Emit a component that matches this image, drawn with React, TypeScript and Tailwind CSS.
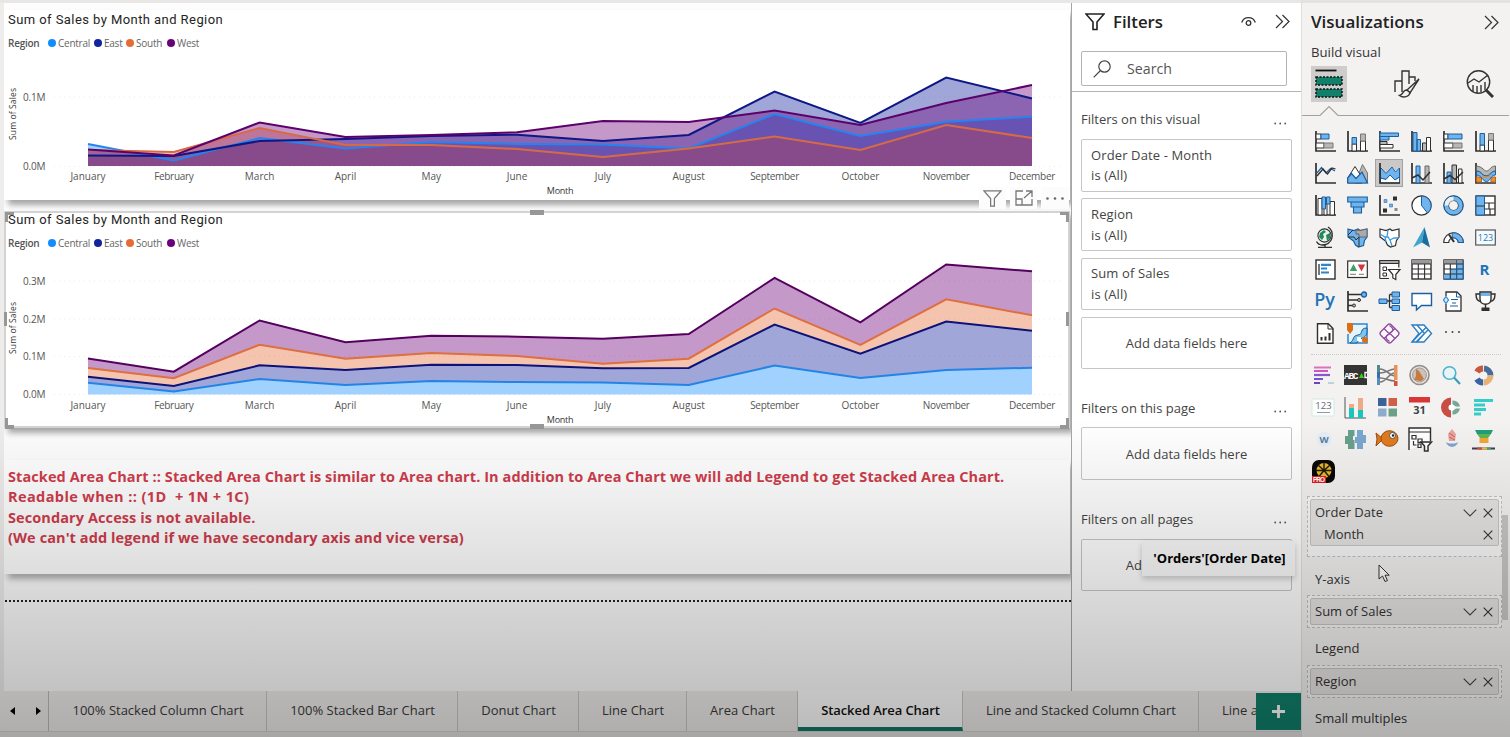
import type { ReactNode } from "react";

const K = "#2f2f2f";
const B = "#6fb4ec";
const D = "#1b5f9e";
const G = "#b9b7b6";

const MONTHS = [
  "January", "February", "March", "April", "May", "June",
  "July", "August", "September", "October", "November", "December",
];

type Series = { color: string; line: string; ys: number[] };

const AREA: Series[] = [
  { color: "#118DFF", line: "#2484f2", ys: [144, 160.5, 138, 148.5, 142, 144, 144.5, 148.5, 114, 136, 121.7, 116.7] },
  { color: "#12239E", line: "#0d1785", ys: [155.5, 156, 141, 139, 136, 134.7, 141, 135, 91.5, 123, 77.5, 98.5] },
  { color: "#E66C37", line: "#d76a45", ys: [150, 152, 128, 145, 145, 149, 157, 148.5, 136.5, 150, 125, 138] },
  { color: "#6B007B", line: "#5c006c", ys: [149.5, 155.5, 122.5, 137, 135, 132.3, 121, 122, 110.5, 125, 103, 85] },
];

const STACKED: Series[] = [
  { color: "#118DFF", line: "#2484e6", ys: [382.7, 391.5, 379, 385, 381, 382, 382.5, 385, 365.5, 378, 370, 367.7] },
  { color: "#12239E", line: "#0c1278", ys: [376.7, 386, 365.3, 370, 364.7, 365, 368.3, 368, 324.5, 353.7, 321.5, 330.7] },
  { color: "#E66C37", line: "#dd6f40", ys: [368, 378.3, 344.7, 358.7, 353, 356, 363.7, 358.7, 308.5, 345, 299.3, 315.3] },
  { color: "#6B007B", line: "#55005f", ys: [358.5, 371.7, 320.5, 342.3, 335.7, 336.7, 338.7, 334, 277.9, 322.3, 264.5, 271.3] },
];

const monthX = (i: number) => 88 + i * 85.82;

const points = (ys: number[]) => ys.map((y, i) => `${monthX(i).toFixed(1)},${y}`);

function Chart(props: {
  top: number; height: number; base: number; labelY: number; monthY: number; titleY: number;
  ticks: [string, number][]; series: Series[]; stacked?: boolean;
}) {
  const { top, height, base, labelY, monthY, titleY, ticks, series, stacked } = props;
  return (
    <svg
      className="block w-full"
      height={height}
      viewBox={`5 ${top} 1065 ${height}`}
      fontFamily="'Open Sans', 'Noto Sans', sans-serif"
      fontSize="10"
      fill="#555"
    >
      {ticks.map(([t, y]) => (
        <g key={t}>
          <line x1="54" x2="1060" y1={y} y2={y} stroke="#ebebeb" strokeDasharray="1 4" />
          <text x="23" y={y + 3.7} textLength="22.5">{t}</text>
        </g>
      ))}
      <text transform={`translate(16 ${titleY}) rotate(-90)`} textAnchor="middle" fontSize="8.5" fill="#333" textLength="52">
        Sum of Sales
      </text>
      {series.map((s, i) => {
        const floor = stacked && i > 0
          ? points(series[i - 1].ys).reverse()
          : [`${monthX(11)},${base}`, `${monthX(0)},${base}`];
        return <polygon key={s.color} points={[...points(s.ys), ...floor].join(" ")} fill={s.color} fillOpacity="0.4" />;
      })}
      {series.map((s) => (
        <polyline key={s.color} points={points(s.ys).join(" ")} fill="none" stroke={s.line} strokeWidth="2" />
      ))}
      {MONTHS.map((m, i) => (
        <text key={m} x={monthX(i)} y={labelY} textAnchor="middle" letterSpacing={m.length > 7 ? -0.3 : 0}>{m}</text>
      ))}
      <text x="560" y={monthY} textAnchor="middle" fontSize="9" letterSpacing="-0.3" fill="#333">Month</text>
    </svg>
  );
}

function ChartHeader() {
  return (
    <div>
      <div className="h-[20px] whitespace-nowrap font-[Roboto,sans-serif] text-[13px] leading-[20px] tracking-[0.43px] text-[#252423]">
        Sum of Sales by Month and Region
      </div>
      <div className="mt-[5px] flex h-[16px] items-center text-[10px] leading-[16px] tracking-[-0.25px] text-[#666]">
        <span className="mr-[6px] w-[34px] whitespace-nowrap font-semibold text-[#555]">Region</span>
        {[["Central", "bg-[#118DFF]", "w-[46px]"], ["East", "bg-[#12239E]", "w-[32px]"], ["South", "bg-[#E66C37]", "w-[41px]"], ["West", "bg-[#6B007B]", "w-[40px]"]].map(([n, c, w]) => (
          <span key={n} className={`flex items-center gap-[2px] ${w}`}>
            <i className={`h-[8px] w-[8px] shrink-0 rounded-full ${c}`} />
            {n}
          </span>
        ))}
      </div>
    </div>
  );
}

function Chevrons() {
  return (
    <svg width="15" height="15" viewBox="0 0 15 15" fill="none" stroke="#333" strokeWidth="1.2">
      <path d="M1 1l6.5 6.5L1 14M7.5 1L14 7.5 7.5 14" />
    </svg>
  );
}

function FilterCard({ name }: { name?: string }) {
  return (
    <div className="flex h-[52.5px] w-[211px] flex-col justify-center rounded-[2px] border border-[#c8c6c4] px-[9px] text-[13px] leading-[20.5px] text-[#444]">
      {name ? (
        <>
          <div className="tracking-[0.12px]">{name}</div>
          <div className="tracking-[0.12px]">is (All)</div>
        </>
      ) : (
        <div className="pt-px text-center text-[13px]">Add data fields here</div>
      )}
    </div>
  );
}

function FilterHeading({ text }: { text: string }) {
  return (
    <div className="flex h-[20px] items-center justify-between pr-[14px] text-[13px] text-[#444]">
      <span>{text}</span>
      <svg width="13" height="3" viewBox="0 0 13 3" fill="#555" className="relative top-[3px]">
        <circle cx="1.2" cy="1.5" r="0.9" /><circle cx="6.2" cy="1.5" r="0.9" /><circle cx="11.2" cy="1.5" r="0.9" />
      </svg>
    </div>
  );
}

const axis = <path d="M1 0V20H21" fill="none" stroke={K} strokeWidth="1.7" />;
const box = (fill = "#fff") => <rect x="1" y="1" width="19" height="19" fill={fill} stroke={K} strokeWidth="1.4" />;

const STANDARD: ReactNode[] = [
  <>{axis}<g stroke={K}><path d="M1 3h5v5H1z" fill="#fff" /><path d="M6 3h8v5H6z" fill={B} stroke={D} /><path d="M1 12h8v5H1z" fill="#fff" /><path d="M9 12h9v5H9z" fill={G} stroke="#777" /></g></>,
  <>{axis}<path d="M5 13h4.500v7H5z" fill="#fff" stroke={K} /><path d="M5 6.5h4.500v6.5H5z" fill={B} stroke={D} /><path d="M13.500 10h5v10h-5z" fill="#fff" stroke={K} /><path d="M13.500 3h5v7h-5z" fill={G} stroke="#777" /></>,
  <>{axis}<path d="M1 2h18.5v3.500H1z" fill={B} stroke={D} /><path d="M1 5.500h9V9H1z" fill={B} stroke={D} /><path d="M1 10.500h7v3H1z" fill={G} stroke={K} /><path d="M1 13.500h13v3.500H1z" fill="#fff" stroke={K} /></>,
  <>{axis}<path d="M2 1.500h4V20H2zM6 8.500h3.500V20H6z" fill={B} stroke={D} /><path d="M11.500 12h4v8h-4z" fill={G} stroke={K} /><path d="M15.500 6.500h4V20h-4z" fill="#fff" stroke={K} /></>,
  <>{axis}<path d="M1 3h4v5H1zM1 12h9v5H1z" fill="#fff" stroke={K} /><path d="M5 3h14v5H5z" fill={B} stroke={D} /><path d="M10 12h9v5h-9z" fill={G} stroke="#777" /></>,
  <>{axis}<path d="M5 14h4.500v6H5zM13.500 9h5v11h-5z" fill="#fff" stroke={K} /><path d="M5 2.500h4.500V14H5z" fill={B} stroke={D} /><path d="M13.500 2.500h5V9h-5z" fill={G} stroke="#777" /></>,
  <>{axis}<path d="M2 10L6.500 4.500 11 10l4.500-4.500L20 8" fill="none" stroke={D} strokeWidth="1.2" /><path d="M2 13L8 6l4.500 5 4.500-6 3.500 1" fill="none" stroke={K} strokeWidth="1.3" /></>,
  <><path d="M8 20L15.500 1.500 20.500 10v10z" fill={G} stroke="#777" /><path d="M.7 15L8 3.500 15 14.500v5.500H.7z" fill="#fff" stroke={K} /><path d="M.7 20v-5L4.500 10.500 9 15.500l6-6.500 5.500 11z" fill={B} stroke={D} strokeWidth="1.2" /></>,
  <><path d="M2 19.500V5l5 5L13 4l4 4 3.500-3v14.500z" fill="#fff" /><path d="M1.500 15V4.500L7 10.500 13 4l3.500 5 4-4v9l-4.500 3-5-5-4 4.500z" fill={B} stroke={D} /><path d="M1.500 20v-5L7 16.500l4-4.500 5 5 4.500-3v6z" fill="#fff" stroke={D} />{axis}</>,
  <>{axis}<path d="M5 3h4v17H5z" fill={B} stroke={D} /><path d="M14 3h4v17h-4z" fill={G} stroke="#666" /><path d="M1 15l6-3 5 5 7-8" fill="none" stroke={K} strokeWidth="1.5" /></>,
  <>{axis}<path d="M4 9h4v11H4z" fill={B} stroke={D} /><path d="M9 2h4.500v18H9z" fill={G} stroke={K} /><path d="M15.500 6h3.500v14h-3.500z" fill="#fff" stroke={K} /><path d="M1 16l6-3.500 5 4 8-7.500" fill="none" stroke={K} strokeWidth="1.5" /></>,
  <>{axis}<path d="M1.500 3c7 1 7 5 10 5s4-5 9-5v5c-5 0-6 5-9.500 5S7 8 1.500 8z" fill={G} stroke="#666" /><path d="M1.500 14h5v5h-5zM16 14h4.500v5H16z" fill="#e78f3c" stroke="#b9651a" /><path d="M1.500 8c5 0 5 5 10 5s4-5 9-5v4c-5 0-5 6.500-9 6.500S6.500 12 1.500 12z" fill={B} stroke={D} /><path d="M7 12.500c2 2.500 6 2.500 8 0" stroke="#e78f3c" strokeWidth="1.5" fill="none" /></>,
  <>{axis}<path d="M3 3.500h4V20H3zM9 9h3v11H9zM15 6.500h4.500V20H15z" fill="#fff" stroke={K} /><path d="M7 2h3.500v12H7zM11.500 2H15v7h-3.500z" fill={B} stroke={D} /></>,
  <g fill={B} stroke={D} strokeWidth="1.1"><path d="M.7 2h19.600v5H.7zM4 7h13v5H4zM6.500 12h8v6h-8z" /></g>,
  <>{axis}<g fill={K}><path d="M14 1.500h4v4h-4zM4 13.500h4v4H4z" /></g><g fill={B} stroke={D} strokeWidth=".5"><path d="M5 4.500h3v3H5zM10.500 9h3v3h-3z" /></g><path d="M15.500 13h3v3h-3z" fill="#888" /></>,
  <><circle cx="10.500" cy="10.500" r="9.6" fill="#fff" stroke={K} strokeWidth="1.2" /><path d="M10.500 1a9.600 9.600 0 0 1 6 17l-6-7.500z" fill={B} stroke={D} /></>,
  <><circle cx="10.500" cy="10.500" r="7.2" fill="none" stroke={K} strokeWidth="5.5" /><circle cx="10.500" cy="10.500" r="7.2" fill="none" stroke={B} strokeWidth="4.2" /><path d="M10.500 3.300a7.200 7.200 0 0 0-7.200 7.200" fill="none" stroke="#eee" strokeWidth="4.2" /><circle cx="10.500" cy="10.500" r="9.8" fill="none" stroke={D} /></>,
  <>{box()}<path d="M1 1h8.500v19H1z" fill={B} stroke={D} /><path d="M1 11h8.500M9.500 8h10M14 8v6M9.500 14h10M15 14v6" stroke={K} fill="none" strokeWidth="1.2" /></>,
  <><circle cx="9.500" cy="8.500" r="6.6" fill="#e9f2ed" stroke={K} strokeWidth="1.1" /><path d="M5 6l4-3 2 2-3 2 1 3-2 3-3-3zM11 8l4-2v5l-3 3z" fill="#218a5b" /><path d="M13 0c6 4 6 14-2 17.500-4 1-8 0-9.500-3M10 17.500V20M3 20.300h14" fill="none" stroke={K} strokeWidth="1.3" /></>,
  <><path d="M1 2l6 1.500L11 2l2 1.500L20 2v8l-2.500 3.500-1 5-5 1.500-3-2-2-4L1 10z" fill={B} stroke={D} strokeWidth="1.2" /><path d="M9 3l4 .5L20 2v8h-8V7H9z" fill="#aaa" stroke="#666" /><path d="M1 10h6l2 3 3-3v10M1 8l5-5" fill="none" stroke={K} /></>,
  <><path d="M1 2l6 1.500L11 2l2 1.500L20 2v8l-2.500 3.500-1 5-5 1.500-3-2-2-4L1 10z" fill="#fff" stroke={K} strokeWidth="1.2" /><path d="M1 7l5 3h3l2 3 4-2h5M6 10l1 5M9 3l-1 7M11 13l2 6" fill="none" stroke="#3d9be0" strokeWidth="1.3" /></>,
  <><path d="M13.500 0L2 20.500l9-5z" fill="#3ea6cf" /><path d="M13.500 0l5.500 20.500-8-5z" fill="#176f9e" /></>,
  <><path d="M.7 15.500a9.800 9.800 0 0 1 19.600 0h-5a4.800 4.800 0 0 0-9.600 0z" fill="#fff" stroke={K} strokeWidth="1.1" /><path d="M9 5.800a9.800 9.800 0 0 1 11.300 9.700h-5A4.800 4.800 0 0 0 9.500 10.800z" fill={B} stroke={D} /><path d="M6 7.500l5 7.500" stroke={K} strokeWidth="2" /></>,
  <><rect x=".7" y="3" width="19.6" height="15" fill="#f5fafd" stroke="#555" strokeWidth="1.2" /><text x="10.500" y="14" fontSize="9" textAnchor="middle" fill="#1d7cc0" fontFamily="'Open Sans', sans-serif">123</text></>,
  <>{box()}<path d="M4 5v11" stroke={K} strokeWidth="1.3" /><path d="M6 5.800h10M6 9.500h6M6 13.500h8" stroke="#2b86cf" strokeWidth="2.2" /></>,
  <><rect x=".7" y="2" width="19.6" height="16.5" fill="#fff" stroke={K} strokeWidth="1.2" /><path d="M6.500 5l3.700 7H2.800z" fill="#3aa25e" /><path d="M14.500 12.500L10.800 5.500h7.400z" fill="#d8323d" /><path d="M3 15.300h6M12 15.300h5" stroke="#777" /></>,
  <><path d="M.8 19.500V1.500h19v7" fill="#fff" stroke={K} strokeWidth="1.2" /><path d="M.8 1.500h19v3h-19z" fill="#aaa" stroke={K} /><path d="M.8 19.500H10M4 8h3.500v3.500H4zM4 14h3.500v3H4z" fill="none" stroke={K} /><path d="M9.500 10.500H21l-4.200 5v5l-3-1.500v-3.500z" fill="#fff" stroke={K} strokeWidth="1.2" /></>,
  <>{box()}<path d="M1 1h19v4H1z" fill="#999" /><path d="M1 5h19M1 10h19M1 15h19M7.300 5v15M13.600 5v15" stroke={K} strokeWidth="1.1" /></>,
  <>{box()}<path d="M1 1h19v4H1z" fill="#999" /><path d="M13.600 5H20v10h-6.400zM1 15h19v5H1zM7.300 10h6.300v10H7.300z" fill={B} /><path d="M1 5h19M1 10h19M1 15h19M7.300 5v15M13.600 5v15" stroke={K} strokeWidth="1.1" /><path d="M13.600 1v19M20 1v19H1" stroke={D} fill="none" /></>,
  <text x="9.5" y="15.5" fontSize="15" fontWeight="700" textAnchor="middle" fill="#2274b8" fontFamily="'Open Sans', sans-serif">R</text>,
  <text x="9.5" y="15" fontSize="18" fontWeight="600" textAnchor="middle" fill="#2274b8" fontFamily="'Open Sans', sans-serif">Py</text>,
  <>{axis}<path d="M1 3.500h13M1 9h10M1 14.500h5" stroke={K} strokeWidth="1.3" /><circle cx="17" cy="3.500" r="2.5" fill={B} stroke={D} strokeWidth="1.3" /><circle cx="12" cy="9" r="1.5" fill={G} stroke={K} /><circle cx="7" cy="14.500" r="1.5" fill={G} stroke={K} /></>,
  <><path d="M8 10h5M10.500 3.500v13M10.500 3.500H13M10.500 16.500H13" stroke={K} fill="none" strokeWidth="1.3" /><path d="M0 8h8v4.500H0zM13 1h7.500v5H13zM13 8h7.500v4.500H13zM13 14.500h7.500v5H13z" fill={B} stroke={D} /></>,
  <path d="M1 2.500h19.500v12H10.500L5.500 19v-4.500H1z" fill="#fff" stroke={D} strokeWidth="1.4" />,
  <><path d="M3 5V1h11l4 4v15H3v-7" fill="#fff" stroke={K} strokeWidth="1.3" /><path d="M13.500 1v5H18M8 8.500h7M9 12h4M7 15h8" stroke={D} fill="none" /><path d="M3 5.500L5.500 9 3 12.500.5 9z" fill="#d6ecfb" stroke="#2b86cf" strokeWidth="1.2" /></>,
  <><path d="M5 1h11v7c0 7-11 7-11 0z" fill="#fff" stroke={K} strokeWidth="1.4" /><path d="M5 3H1c0 6 2 7 5 7.500M16 3h4c0 6-2 7-5 7.500M10.500 13v4" fill="none" stroke={K} strokeWidth="1.4" /><path d="M6 2h9v3H6z" fill={B} /><path d="M6.500 16.500h8v3.500h-8z" fill={K} /></>,
  <><path d="M2.500.8h10.800L18 5.500v14.700H2.500z" fill="#fff" stroke={K} strokeWidth="1.4" /><path d="M13 1v5h5" fill="none" stroke={K} /><path d="M6.500 17.500V14M10.500 17.500v-4M14.500 17.500V10" stroke={K} strokeWidth="2" /></>,
  <><path d="M6 1h14v19H1V11" fill="#e6f3fb" stroke="#2b86cf" strokeWidth="1.5" /><path d="M20 5c-8 0-3 6-9 7s-3 4-8 8h7c3-7 8-3 10-10z" fill="#7cc4ea" stroke={D} /><path d="M0 0h6v7l-3 4-3-4z" fill="#db6f17" /><circle cx="18" cy="17" r="3" fill="#db6f17" /><path d="M10 14h4v4h-4z" fill="#fff" /></>,
  <g fill="#fbf7fc" stroke="#8d4b9e" strokeWidth="1.3"><path d="M8.800 1.800q1.700-1.600 3.400 0l7 7q1.600 1.700 0 3.400l-7 7q-1.700 1.600-3.400 0l-7-7q-1.600-1.700 0-3.400z" /><path d="M5 5.500l4 4q1.500 1 3 0l1.500-1.500q1-2-.5-3.500l-2.500-2M16 15.500l-4-4q-1.500-1-3 0L7.500 13q-1 2 .5 3.500l2.500 2M16 5.500l-11 10" fill="none" /></g>,
  <g fill="#fff" stroke="#2b7fc4" strokeWidth="1.4"><path d="M1 2h12l7.500 8.500-7.500 8.500H1l7-8.500z" /><path d="M6 2l7.500 8.500L6 19M1 19L15 4.500M5 19l12-12" fill="none" /></g>,
  <g fill="#444"><circle cx="3" cy="9" r="1" /><circle cx="9.500" cy="9" r="1" /><circle cx="16" cy="9" r="1" /></g>,
];

const CUSTOM: ReactNode[] = [
  <><path d="M1 2.500h17" stroke="#e070bd" strokeWidth="2" /><path d="M1 6h14" stroke="#cf55c6" strokeWidth="2" /><path d="M1 10h16" stroke="#8b55cf" strokeWidth="2.2" /><path d="M1 14h9" stroke="#6f55cf" strokeWidth="2" /><path d="M1 18h6" stroke="#6f45bf" strokeWidth="2" /><path d="M15 18h6" stroke="#b4d5dd" strokeWidth="2" /></>,
  <><path d="M-1 0h23v20H-1z" fill="#343434" /><text x="-1" y="13.5" fontSize="9.5" fontWeight="700" fill="#fff" textLength="14.5" fontFamily="'Liberation Mono', monospace">ABC</text><path d="M16.500 8l2.500 5h-5z" fill="#35d11d" /><path d="M22 7.500h-2v5H22" stroke="#fff" fill="none" strokeWidth="1.3" /></>,
  <><g fill="none" stroke="#777" strokeWidth="1.5"><path d="M3 4c7 0 9 7 15 7M3 8c7 0 9-4 15-4M3 13c7 0 8 3 15 3M3 17c7 0 8-9 15-9" /></g><path d="M0 0h3v7H0z" fill="#4d8c87" /><path d="M0 7h3v6H0z" fill="#346fb3" /><path d="M0 13h3v7H0z" fill="#5b8bb8" /><path d="M17 0h3.500v15H17z" fill="#e8935c" /><path d="M17 16h3.500v5H17z" fill="#d94e38" /></>,
  <><circle cx="10.500" cy="10" r="9.5" fill="#e8e4df" stroke="#8e8e8e" strokeWidth="1.6" /><circle cx="10.500" cy="10" r="7" fill="#c9c2ba" stroke="#a99" /><path d="M7 4c4 2 4 4 8 10l-3 2-7-1 2-4z" fill="#c67a3c" /></>,
  <><circle cx="8.500" cy="8" r="6.3" fill="#e7f5f8" stroke="#4eb3c8" strokeWidth="1.6" /><path d="M13 12.500l6 6.500" stroke="#3e9cbd" strokeWidth="2.2" /></>,
  <g fill="none" strokeWidth="6"><path d="M11 3.500a7 7 0 0 1 6.500 7" stroke="#4a6c9b" /><path d="M17.500 10.500a7 7 0 0 1-7 7" stroke="#e6b172" /><path d="M10 17.500a7 7 0 0 1-6-3.500" stroke="#3963a4" /><path d="M4 7a7 7 0 0 1 6-3.500" stroke="#c8573f" /></g>,
  <><path d="M-1 2h22v17H-1z" fill="#fdfefe" stroke="#d4e9e3" /><text x="10.500" y="12" fontSize="9.5" textAnchor="middle" fill="#667" fontFamily="'Open Sans', sans-serif">123</text><path d="M4 15.500h13" stroke="#999" /></>,
  <><path d="M0 0v21h21" fill="none" stroke="#555" /><path d="M4 11h5v10H4zM13 13h5v8h-5z" fill="#1bc5be" /><path d="M4 7h5v4H4zM13 1h5v12h-5z" fill="#f0a987" /></>,
  <><path d="M1 1h8.500v8H1z" fill="#3d6199" /><path d="M11.500 1H20v8h-8.500z" fill="#cf5f48" /><path d="M1 11.500h8.500v8H1z" fill="#8cabcd" /><path d="M11.500 11.500H20v8h-8.500z" fill="#6da187" /></>,
  <><path d="M1 1h19v18H1z" fill="#f5f5f5" /><path d="M0 0h21v5.500H0z" fill="#d93636" /><text x="10.500" y="17" fontSize="11" fontWeight="700" textAnchor="middle" fill="#444" fontFamily="'Open Sans', sans-serif">31</text></>,
  <><path d="M10 .5v20a10 10 0 0 1 0-20z" fill="#c84d43" /><path d="M11.500 3.500a7 7 0 0 1 7.500 6h-4l-3.500-2zM11.500 14l3.500-2.500h4a7 7 0 0 1-7.500 6z" fill="#76a898" /><circle cx="10.500" cy="10.500" r="3" fill="#fff" /></>,
  <g stroke="#35cdc9" strokeWidth="2.8"><path d="M1 3.500h19M1 8h11M1 12.500h12M1 17h7" /></g>,
  <><circle cx="11" cy="10" r="7.5" fill="#e6edf4" /><text x="11" y="13.5" fontSize="9.5" fontWeight="700" textAnchor="middle" fill="#557fa8" fontFamily="'Open Sans', sans-serif">W</text></>,
  <><path d="M3 1h6.500v6H8v4h1.500v9H3v-5H0V7h3z" fill="#68a08c" /><path d="M12 1h6v5h3v8h-3v6h-6v-6h-2V8h2z" fill="#7aa7cf" /></>,
  <><path d="M6 10L-1 4l1 6-1 7z" fill="#e07a1e" stroke="#9c4b0c" /><ellipse cx="12.500" cy="9.500" rx="8.500" ry="7.800" fill="#e07a1e" stroke="#9c4b0c" /><circle cx="15.500" cy="6.500" r="3" fill="#fff" stroke="#555" /><circle cx="16" cy="6.500" r="1.2" fill="#222" /></>,
  <><path d="M0 21V-1h21.500v13" fill="#fff" stroke={K} strokeWidth="1.4" /><path d="M0 3h21M3 6.500h4v3.500H3zM9 10h4v3.500H9zM4.500 12v4h3M9 15h3v3.500H9z" fill="none" stroke={K} strokeWidth="1.2" /><path d="M12 13h10.500l-3.500 4v5h-3.500v-5z" fill="#fff" stroke={K} strokeWidth="1.5" /></>,
  <><path d="M11 0l4 5-1 7H8L7 5z" fill="#e9a49d" /><path d="M8 4l6 4M8 8l6 3" stroke="#c8625c" /><path d="M5 13c3 2 9 2 12 0-1 6-10 7-12 0z" fill="#7fa5cf" /></>,
  <><path d="M2 1h18l-2 4H4z" fill="#1f9d79" /><path d="M4 5h14l-3 4H7z" fill="#5eb551" /><path d="M6.500 9h9v5h-9z" fill="#f1a636" /><path d="M-1 19.500h23" stroke="#3b3b53" strokeWidth="2" /><path d="M4 19.500h5" stroke="#d84c36" strokeWidth="2" /><path d="M9 19.500h5" stroke="#e9c238" strokeWidth="2" /><path d="M14 19.500h4" stroke="#45a36d" strokeWidth="2" /></>,
  <><rect x="-1" y="-1" width="23" height="23" rx="7" fill="#080808" /><circle cx="11" cy="9.500" r="7.5" fill="#e5b52f" /><path d="M11 9.500V1.500M11 9.500L5 4M11 9.500L17 4M11 9.500H3M11 9.500h8M11 9.500l-5 6M11 9.500l5 6" stroke="#221a08" strokeWidth="1.4" /><path d="M-1 15h14v7H-1z" fill="#df1f1f" /><text x="0" y="21" fontSize="6.5" fontWeight="700" fill="#fff" textLength="12" fontFamily="'Liberation Sans', sans-serif">PRO</text></>,
];

function IconCell({ children, active }: { children: ReactNode; active?: boolean }) {
  return (
    <div className="flex h-[32px] w-[32px] items-center justify-center">
      <div className={`flex h-[28px] w-[28px] items-center justify-center ${active ? "border border-[#a5a3a1] bg-[#cbc9c8]" : ""}`}>
        <svg width="21" height="21" viewBox="0 0 21 21" className="shrink-0 overflow-visible">{children}</svg>
      </div>
    </div>
  );
}

const Cross = () => (
  <svg width="10" height="10" viewBox="0 0 10 10" stroke="#333" strokeWidth="1.1"><path d="M.7 .7l8.600 8.600M9.300 .7L.7 9.300" /></svg>
);
const Down = () => (
  <svg width="14" height="8" viewBox="0 0 14 8" fill="none" stroke="#444" strokeWidth="1.1"><path d="M.7 .7L7 7 13.300 .7" /></svg>
);

function Well({ name, child, extra }: { name: string; child?: string; extra?: string }) {
  return (
    <div className={`ml-[5px] w-[195px] shrink-0 border border-dashed border-[#c3c1c0] bg-[#f9f9f9] p-[2px] ${extra ?? ""}`}>
      <div className="rounded-[2px] border border-[#c9c7c6] bg-[#e7e5e4] pl-[4px] pr-[5px] text-[13px] text-[#333]">
        <div className="flex h-[25px] items-center">
          <span className="flex-1 pt-px">{name}</span>
          <Down />
          <span className="ml-[6px]"><Cross /></span>
        </div>
        {child && (
          <div className="flex h-[20px] items-center">
            <span className="flex-1 pl-[9px]">{child}</span>
            <Cross />
          </div>
        )}
      </div>
    </div>
  );
}

const TABS: [string, string, boolean?][] = [
  ["100% Stacked Column Chart", "w-[218px]"],
  ["100% Stacked Bar Chart", "w-[191px]"],
  ["Donut Chart", "w-[121px]"],
  ["Line Chart", "w-[108px]"],
  ["Area Chart", "w-[111px]"],
  ["Stacked Area Chart", "w-[165px]", true],
  ["Line and Stacked Column Chart", "w-[236px]"],
];

const HANDLES = [
  "left-[-1px] top-[-1px] h-[10px] w-[9px] border-l-[3px] border-t-[3px]",
  "right-[-1px] top-[-1px] h-[10px] w-[9px] border-r-[3px] border-t-[3px]",
  "left-[-1px] bottom-[-3px] h-[11px] w-[9px] border-l-[3px] border-b-[4px]",
  "right-[-1px] bottom-[-3px] h-[11px] w-[9px] border-r-[3px] border-b-[4px]",
  "left-[524px] top-[-3px] h-[5px] w-[14px] border-t-[5px]",
  "left-[524px] bottom-[-3px] h-[5px] w-[14px] border-t-[5px]",
  "left-[-2px] top-[99px] h-[14px] w-[3px] border-l-[3px]",
  "right-[-1px] top-[99px] h-[14px] w-[3px] border-l-[3px]",
];

export default function App() {
  return (
    <div className="relative flex h-[737px] w-[1510px] overflow-hidden bg-[#f3f2f1] font-['Open_Sans','Noto_Sans',sans-serif] text-[13px]">
      <div className="flex w-[1301px] flex-col">
        <div className="h-[3px] bg-[#e9e7e6]" />
        <div className="flex h-[688px]">
          <main className="w-[1071px] overflow-hidden border-l-4 border-[#eeedec] bg-[#fdfdfd] pt-[7px]">
            <section className="h-[190px] w-[1066px] bg-white pl-[4px] shadow-[4px_5px_6px_rgba(0,0,0,0.35)]">
              <div className="h-[41px]"><ChartHeader /></div>
              <div className="-ml-[3px] w-[1065px]">
                <Chart top={51} height={149} base={166} labelY={180} monthY={193.5} titleY={114}
                  ticks={[["0.1M", 97], ["0.0M", 166.5]]} series={AREA} />
              </div>
            </section>
            <section className="relative mt-[11px] h-[217px] w-[1066px] border-2 border-[#d3d3d3] bg-white pl-[2px] shadow-[4px_5px_6px_rgba(0,0,0,0.35)]">
              <div className="-mt-[3px] h-[40px]"><ChartHeader /></div>
              <div className="-ml-[3px] w-[1065px]">
                <Chart top={250} height={174} base={394.5} labelY={408.5} monthY={422.5} titleY={328}
                  ticks={[["0.3M", 281], ["0.2M", 319], ["0.1M", 356.5], ["0.0M", 394.5]]} series={STACKED} stacked />
              </div>
              {HANDLES.map((h) => <i key={h} className={`absolute border-[#979797] ${h}`} />)}
              <div className="absolute right-[-1px] top-[-26px] flex gap-[4px]">
                <span className="flex h-[22px] w-[27px] items-center justify-center bg-[#fcfcfc]">
                  <svg width="19" height="17" viewBox="0 0 20 18" fill="none" stroke="#777" strokeWidth="1.3"><path d="M1 1h18l-7 8v8H8V9z" /></svg>
                </span>
                <span className="flex h-[22px] w-[27px] items-center justify-center bg-[#fcfcfc]">
                  <svg width="18" height="16" viewBox="0 0 18 16" fill="none" stroke="#777" strokeWidth="1.3"><path d="M8 1H1v14h16V9M1 9h6v6M9 8l8-7M11 1h6v6" /></svg>
                </span>
                <span className="flex h-[22px] w-[28px] items-center justify-center bg-[#fcfcfc]">
                  <svg width="18" height="3" viewBox="0 0 18 3" fill="#666"><circle cx="1.5" cy="1.5" r="1.3" /><circle cx="9" cy="1.5" r="1.3" /><circle cx="16.5" cy="1.5" r="1.3" /></svg>
                </span>
              </div>
            </section>
            <section className="mt-[32px] h-[114px] w-[1066px] bg-white pl-[4px] pt-[7px] text-[14.5px] font-bold leading-[20.4px] tracking-[0.09px] text-[#cf3c4c] shadow-[4px_5px_6px_rgba(0,0,0,0.3)]">
              <p className="whitespace-pre">Stacked Area Chart :: Stacked Area Chart is similar to Area chart. In addition to Area Chart we will add Legend to get Stacked Area Chart.</p>
              <p className="whitespace-pre tracking-[0.4px]">{"Readable when :: (1D  + 1N + 1C)"}</p>
              <p>Secondary Access is not available.</p>
              <p>(We can't add legend if we have secondary axis and vice versa)</p>
            </section>
            <div className="mt-[26px] ml-[1px] h-[2px] bg-[repeating-linear-gradient(90deg,#222_0,#222_2px,transparent_2px,transparent_4px)]" />
          </main>

          <aside className="relative w-[230px] border-l border-[#a6a6a6] bg-white">
            <div className="flex h-[38px] items-center pl-[13px] pr-[11px]">
              <svg width="20" height="18" viewBox="0 0 20 18" fill="none" stroke="#222" strokeWidth="1.6"><path d="M1 1h18l-7 8v7.500H8V9z" /></svg>
              <span className="ml-[8px] flex-1 text-[16.8px] font-semibold text-[#222]">Filters</span>
              <svg width="15" height="11" viewBox="0 0 15 11" fill="none" stroke="#333" strokeWidth="1.3" className="relative top-[-1px] mr-[19px]"><path d="M.7 6.500C3 0 12 0 14.300 6.500" /><circle cx="7.500" cy="7" r="2.3" /></svg>
              <span className="relative top-[-1px]"><Chevrons /></span>
            </div>
            <div className="mt-[10px] ml-[9px] flex h-[35px] w-[206px] items-center rounded-[2px] border border-[#b5b3b1] pl-[11px] text-[14.2px] text-[#555]">
              <svg width="18" height="18" viewBox="0 0 18 18" fill="none" stroke="#444" strokeWidth="1.2"><circle cx="11.500" cy="6.500" r="5.7" /><path d="M7.500 10.500L.7 17.300" /></svg>
              <span className="ml-[16px]">Search</span>
            </div>
            <div className="mt-[5px] h-px bg-[#b5b3b1]" />
            <div className="pl-[9px]">
              <div className="mt-[18px]"><FilterHeading text="Filters on this visual" /></div>
              <div className="mt-[9px] flex flex-col gap-[6.8px]">
                <FilterCard name="Order Date - Month" />
                <FilterCard name="Region" />
                <FilterCard name="Sum of Sales" />
                <FilterCard />
              </div>
              <div className="mt-[29px]"><FilterHeading text="Filters on this page" /></div>
              <div className="mt-[9px]"><FilterCard /></div>
              <div className="mt-[30px]"><FilterHeading text="Filters on all pages" /></div>
              <div className="mt-[9px]"><FilterCard /></div>
            </div>
            <div className="absolute left-[70px] top-[538px] flex h-[35px] w-[153px] items-center justify-center whitespace-nowrap bg-[#fafafa] pl-[2px] text-[13px] font-bold text-black shadow-[0_3px_6px_rgba(0,0,0,0.2)]">
              'Orders'[Order Date]
            </div>
          </aside>
        </div>
        <nav className="flex h-[40px] border-l-4 border-[#eeedec] bg-[#efedec] text-[13px] text-[#3a3a3a]">
          <div className="flex w-[45px] items-center justify-between border-r border-[#bdbbba] pl-[6px] pr-[7px]">
            <svg width="5" height="8" viewBox="0 0 5 8"><path d="M5 0v8L0 4z" fill="#000" /></svg>
            <svg width="5" height="8" viewBox="0 0 5 8"><path d="M0 0v8l5-4z" fill="#000" /></svg>
          </div>
          {TABS.map(([t, w, on]) => (
            <div key={t} className={`flex shrink-0 items-center justify-center whitespace-nowrap border-r border-[#c9c7c6] pl-px ${w} ${on ? "border-b-4 border-b-[#117865] bg-white pt-[4px] font-semibold tracking-[-0.08px] text-[#111]" : ""}`}>
              {t}
            </div>
          ))}
          <div className="flex w-[57px] items-center overflow-hidden whitespace-nowrap pl-[23px]">Line and</div>
          <div className="mt-[2px] flex h-[37px] w-[45px] shrink-0 items-center justify-center bg-[#10806a]">
            <svg width="13" height="13" viewBox="0 0 13 13"><path d="M6.500 0v13M0 6.500h13" stroke="#fff" strokeWidth="2.8" /></svg>
          </div>
        </nav>
        <div className="h-[6px] border-t border-[#d5d3d2] bg-[#e5e3e2]" />
      </div>

      <aside className="relative flex w-[209px] flex-col border-l border-[#e1dfde] bg-[#f3f2f1]">
        <div className="h-[3px] shrink-0 bg-[#e5e3e2]" />
        <div className="flex h-[38px] shrink-0 items-center justify-between pl-[9px] pr-[11px]">
          <span className="text-[17px] font-semibold text-[#222]">Visualizations</span>
          <Chevrons />
        </div>
        <div className="h-[22px] shrink-0 pl-[9px] text-[13.2px] leading-[22px] text-[#333]">Build visual</div>
        <div className="mt-[3px] flex h-[36px] shrink-0 items-center justify-between pl-[9px] pr-[16px]">
          <div className="flex h-[36px] w-[36px] items-center justify-center bg-[#cfcdcc]">
            <svg width="28" height="30" viewBox="0 0 28 30"><path d="M.5 1.500h21" stroke="#111" strokeWidth="1.8" /><path d="M1 8h26v8H1zM1 20h26v8H1z" fill="#10806a" stroke="#111" strokeWidth="1.5" strokeDasharray="2 1.5" /></svg>
          </div>
          <svg width="26" height="28" viewBox="0 0 26 28" fill="none" stroke="#333" strokeWidth="1.4"><path d="M1 22V11h7M8 22V1h7v13M15 7h6v4" /><path d="M25 9L13 20l3 3z" fill="#f3f2f1" /><path d="M12.500 20c-4 0-3 5-7 5.500 4 3 10 1 10.500-3z" fill="#f3f2f1" /></svg>
          <svg width="28" height="28" viewBox="0 0 28 28" fill="none" stroke="#333" strokeWidth="1.4"><circle cx="12.500" cy="12" r="11.2" /><path d="M2 13l6-4 5 3 9-7M7 21v-6M11 23v-7M15 22v-7M19 20v-8" /><path d="M20 20l7 7" strokeWidth="3" /></svg>
        </div>
        <svg width="208" height="14" viewBox="0 0 208 14" fill="none" className="mt-[3px] block shrink-0"><path d="M0 10.500h18l9-9 9 9h171" stroke="#a3a19f" strokeWidth="1.2" /></svg>
        <div className="mt-[6px] ml-[7px] grid w-[192px] shrink-0 grid-cols-6">
          {STANDARD.map((ic, i) => <IconCell key={i} active={i === 8}>{ic}</IconCell>)}
        </div>
        <div className="mx-[9px] mt-[5px] border-t border-dotted border-[#cccac9]" />
        <div className="mt-[4px] ml-[5px] grid w-[192px] shrink-0 grid-cols-6">
          {CUSTOM.map((ic, i) => <IconCell key={i}>{ic}</IconCell>)}
        </div>
        <div className="h-[9px] shrink-0" />
        <Well name="Order Date" child="Month" extra="pb-[10px]" />
        <div className="h-[38px] shrink-0 pl-[13px] pt-[4px] text-[13px] leading-[36px] text-[#333]">Y-axis</div>
        <Well name="Sum of Sales" />
        <div className="h-[37px] shrink-0 pl-[13px] text-[13px] leading-[40px] text-[#333]">Legend</div>
        <Well name="Region" />
        <div className="h-[36px] shrink-0 pl-[13px] text-[13px] leading-[40px] text-[#333]">Small multiples</div>
        <div className="absolute right-[2px] top-[515px] h-[105px] w-[6px] bg-[#c9c7c6]" />
        <svg width="12" height="19" viewBox="0 0 12 19" className="absolute left-[76px] top-[564px]"><path d="M1 1v14l3.500-3 2.500 5.500 2.500-1L7 11.200h4.200z" fill="#fff" stroke="#333" /></svg>
      </aside>
      <div className="pointer-events-none absolute inset-x-0 bottom-0 h-[317px] bg-linear-to-b from-transparent to-black/27" />
    </div>
  );
}
